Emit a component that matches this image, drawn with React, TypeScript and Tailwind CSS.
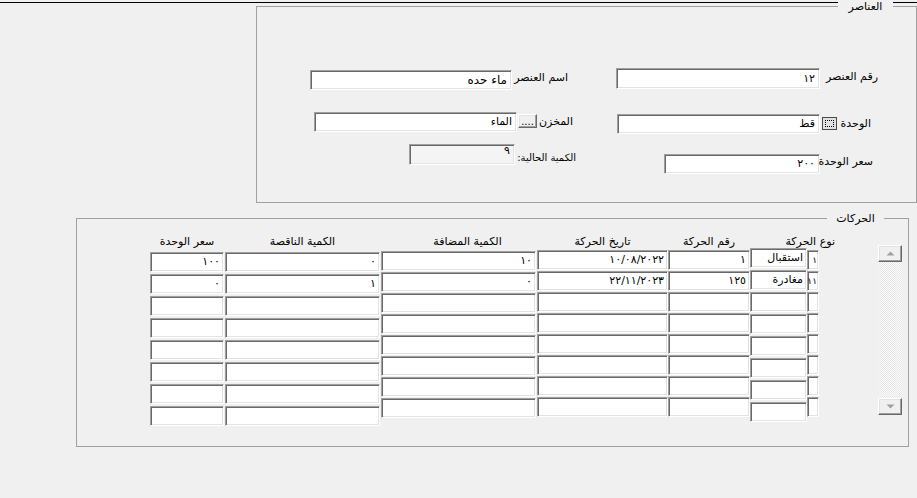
const font = "font-['DejaVu_Sans',sans-serif]";

const sunken =
  "bg-white border border-t-[#a0a0a0] border-l-[#a0a0a0] border-b-white border-r-white shadow-[inset_1px_1px_0_#696969,inset_-1px_-1px_0_#e3e3e3]";

const raised =
  "bg-[#f0f0f0] border border-t-white border-l-white border-b-[#696969] border-r-[#696969] shadow-[inset_-1px_-1px_0_#a0a0a0,inset_1px_1px_0_#e3e3e3]";

type Col = {
  width: string;
  header?: string;
  headerClass: string;
  cellsClass: string;
  cellText: string;
  values: string[];
};

const rows = 8;

const columns: Col[] = [
  {
    width: "w-[12px]",
    headerClass: "",
    cellsClass: "mt-[2px] gap-[1px]",
    cellText: "text-[9px] pr-px",
    values: ["١", "١١"],
  },
  {
    width: "w-[57px]",
    header: "نوع الحركة",
    headerClass: "w-[85px] -mr-[28px]",
    cellsClass: "mt-0 gap-[2px]",
    cellText: "text-[11px] pr-[3px]",
    values: ["استقبال", "مغادرة"],
  },
  {
    width: "w-[82px]",
    header: "رقم الحركة",
    headerClass: "text-center",
    cellsClass: "mt-[2px] gap-[1px]",
    cellText: "text-[11px] pr-[3px]",
    values: ["١", "١٢٥"],
  },
  {
    width: "w-[131px] ml-px",
    header: "تاريخ الحركة",
    headerClass: "text-center",
    cellsClass: "mt-[2px] gap-[1px]",
    cellText: "text-[11px] pr-[3px]",
    values: ["١٠/٠٨/٢٠٢٢", "٢٢/١١/٢٠٢٣"],
  },
  {
    width: "w-[155px] ml-px",
    header: "الكمية المضافة",
    headerClass: "text-center pl-[18px]",
    cellsClass: "mt-[3px] gap-[1px]",
    cellText: "text-[11px] pr-[3px]",
    values: ["١٠", "٠"],
  },
  {
    width: "w-[155px] ml-px",
    header: "الكمية الناقصة",
    headerClass: "text-center",
    cellsClass: "mt-[4px] gap-[2px]",
    cellText: "text-[11px] pr-[3px]",
    values: ["٠", "١"],
  },
  {
    width: "w-[74px] ml-px",
    header: "سعر الوحدة",
    headerClass: "text-center",
    cellsClass: "mt-[4px] gap-[2px]",
    cellText: "text-[11px] pr-[3px]",
    values: ["١٠٠", "٠"],
  },
];

function Field({ className, text, textClass = "text-[11px]" }: { className: string; text?: string; textClass?: string }) {
  return (
    <div className={`${sunken} ${className} flex items-center pr-[4px] overflow-hidden whitespace-nowrap`}>
      <span className={`${textClass} leading-[14px]`}>{text}</span>
    </div>
  );
}

function Label({ className, children }: { className: string; children: string }) {
  return <div className={`${className} relative z-10 leading-[13px] whitespace-nowrap`}>{children}</div>;
}

function Arrow({ up }: { up?: boolean }) {
  return (
    <svg width="9" height="5" viewBox="0 0 9 5">
      {up ? <path d="M0.5 4.5 L4.5 0.5 L8.5 4.5 Z" fill="#a0a0a0" /> : <path d="M0.5 0.5 L4.5 4.5 L8.5 0.5 Z" fill="#a0a0a0" />}
    </svg>
  );
}

export default function App() {
  return (
    <div dir="rtl" className={`${font} w-[917px] h-[498px] bg-[#f0f0f0] text-black overflow-hidden pt-[2px]`}>
      <div className="h-px bg-black" />

      {/* العناصر */}
      <div className="relative mt-[3px] w-[661px] h-[197px] border border-[#a0a0a0]">
        <span className="absolute -top-[7px] right-[23px] w-[55px] bg-[#f0f0f0] text-center text-[11px] leading-[13px]">
          العناصر
        </span>

        <div className="flex flex-col pt-[61px]">
          <div className="flex items-start h-[22px] pr-[38px]">
            <Label className="w-[58px] mt-[2px] text-[11px]">رقم العنصر</Label>
            <Field className="w-[204px] h-[21px]" text="١٢" />
            <Label className="w-[56px] mr-[48px] mt-[3px] text-[11px]">اسم العنصر</Label>
            <Field className="w-[202px] h-[20px] mt-[2px]" text="ماء حده" textClass="text-[12px]" />
          </div>

          <div className="flex items-start h-[22px] mt-[22px] pr-[45px]">
            <Label className="w-[34px] mt-[5px] text-[11px]">الوحدة</Label>
            <div className="w-[15px] h-[13px] mt-[5px] ml-[2px] bg-[#e1e1e1] border border-[#4a4a4a] p-[2px]">
              <div className="w-full h-full border border-dotted border-black" />
            </div>
            <Field className="w-[203px] h-[20px] mt-[2px]" text="قط" />
            <Label className="w-[36px] mr-[44px] mt-[3px] text-[11px]">المخزن</Label>
            <div className={`${raised} w-[19px] h-[14px] mt-[2px] ml-px flex items-end justify-center`}>
              <span className="text-[10px] leading-[10px]">....</span>
            </div>
            <Field className="w-[203px] h-[20px]" text="الماء" />
          </div>

          <div className="flex items-start mt-[10px] pr-[43px]">
            <Label className="w-[53px] mt-[11px] text-[11px]">سعر الوحدة</Label>
            <Field className="w-[156px] h-[20px] mt-[10px]" text="٢٠٠" />
            <Label className="w-[61px] mr-[88px] mt-[7px] text-[10px]">الكمية الحالية:</Label>
            <div className="bg-[#f4f4f4] border border-t-[#a0a0a0] border-l-[#a0a0a0] border-b-white border-r-white shadow-[inset_1px_1px_0_#696969,inset_-1px_-1px_0_#e3e3e3] w-[106px] h-[21px] pr-[4px] pt-[1px]">
              <span className="block text-[11px] leading-[9px]">٩</span>
            </div>
          </div>
        </div>
      </div>

      {/* الحركات */}
      <div className="relative mt-[15px] mr-[8px] w-[833px] h-[229px] border border-[#a0a0a0]">
        <span className="absolute -top-[7px] right-[24px] w-[57px] bg-[#f0f0f0] text-center text-[11px] leading-[13px]">
          الحركات
        </span>

        <div className="flex items-start pt-[16px] pr-[6px]">
          <div className="w-[24px] h-[170px] mt-[10px] ml-[59px] flex flex-col bg-[repeating-conic-gradient(#e6e6e6_0%_25%,#fcfcfc_0%_50%)] bg-[length:2px_2px]">
            <div className={`${raised} h-[17px] flex items-center justify-center`}>
              <Arrow up />
            </div>
            <div className="flex-1" />
            <div className={`${raised} h-[17px] flex items-center justify-center`}>
              <Arrow />
            </div>
          </div>

          {columns.map((c, i) => (
            <div key={i} className={`${c.width} flex flex-col shrink-0`}>
              <div className={`h-[13px] text-[11px] leading-[13px] whitespace-nowrap ${c.headerClass}`}>{c.header ?? ""}</div>
              <div className={`flex flex-col ${c.cellsClass}`}>
                {Array.from({ length: rows }).map((_, r) => (
                  <div key={r} className={`${sunken} h-[20px] flex items-center overflow-hidden whitespace-nowrap ${c.cellText}`}>
                    <span className="leading-[14px]">{c.values[r] ?? ""}</span>
                  </div>
                ))}
              </div>
            </div>
          ))}
        </div>
      </div>
    </div>
  );
}
